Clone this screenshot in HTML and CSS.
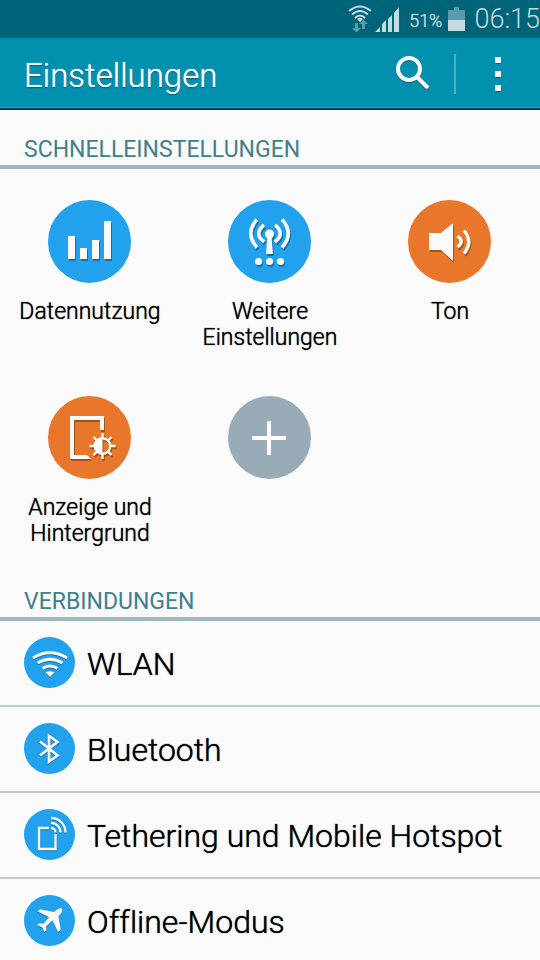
FILE: index.html
```
<!DOCTYPE html>
<html lang="de">
<head>
<meta charset="utf-8">
<meta name="viewport" content="width=device-width, initial-scale=1">
<title>Einstellungen</title>
<link rel="stylesheet" href="styles.css">
</head>
<body>
<div class="status">
  <svg class="status-wifi" width="24" height="28" viewBox="0 0 24 28" aria-hidden="true">
    <g fill="none" stroke="#c3dce2" stroke-width="2">
      <path d="M1 6Q12-3 23 6"/>
      <path d="M4 9.500Q12 2.500 20 9.500"/>
      <path d="M7 13Q12 8 17 13"/>
    </g>
    <path fill="#c3dce2" d="M9 14Q12 11 15 14L12 17Z"/>
    <path fill="#5a9bab" d="M7 18h3v5h3l-4.500 4.500L4 23h3zM14 24v-5h-3l4.500-4.500L20 19h-3v5z"/>
  </svg>
  <svg class="status-signal" width="25" height="25" viewBox="0 0 25 25" aria-hidden="true">
    <path fill="#c3dce2" d="M0 25l5-5v5zM7 25v-8l4-4v12zM13 25V12l4-4v17zM19 25V6l5-6v25z"/>
  </svg>
  <span class="percent">51%</span>
  <svg class="status-battery" width="17" height="24" viewBox="0 0 17 24" aria-hidden="true">
    <path fill="#5a9bab" d="M6 0h5v3h6v10H0V3h6z"/>
    <path fill="#c3dce2" d="M0 13h17v11H0z"/>
  </svg>
  <span class="clock">06:15</span>
</div>
<header class="bar">
  <h1>Einstellungen</h1>
  <button class="bar-button search" type="button" aria-label="Suchen">
    <svg class="engraved" width="36" height="36" viewBox="0 0 36 36" fill="none" stroke="#fafafa" stroke-width="4">
      <circle cx="14" cy="13" r="11"/>
      <path d="M22 21L33 32"/>
    </svg>
  </button>
  <button class="bar-button more" type="button" aria-label="Mehr">
    <svg class="engraved" width="6" height="34" viewBox="0 0 6 34" fill="#fafafa">
      <path d="M0 0h6v6H0zM0 14h6v6H0zM0 28h6v6H0z"/>
    </svg>
  </button>
</header>
<main>
  <section>
    <h2>SCHNELLEINSTELLUNGEN</h2>
    <div class="quick">
      <a class="tile" href="#daten">
        <svg class="disc blue" viewBox="0 0 83 83" fill="#fafafa" aria-hidden="true">
          <path class="glyph" d="M20 36h7v23h-7zM32 48h7v11h-7zM44 40h7v19h-7zM56 21h7v38h-7z"/>
        </svg>
        <span>Datennutzung</span>
      </a>
      <a class="tile" href="#weitere">
        <svg class="disc blue" viewBox="0 0 83 83" fill="#fafafa" aria-hidden="true">
          <g class="glyph">
            <circle cx="41.5" cy="34" r="4.5"/>
            <path d="M39.5 36h4L45 54h-7z"/>
            <g fill="none" stroke="#fafafa" stroke-width="3.6">
              <path d="M36 25Q25.500 33.500 36 42"/>
              <path d="M47 25Q57.500 33.500 47 42"/>
              <path d="M29 19.500Q16.500 33.500 29 47.500"/>
              <path d="M54 19.500Q66.500 33.500 54 47.500"/>
            </g>
            <circle cx="30.500" cy="61.500" r="3.600"/>
            <circle cx="41.500" cy="61.500" r="3.600"/>
            <circle cx="52.500" cy="61.500" r="3.600"/>
          </g>
        </svg>
        <span>Weitere Einstellungen</span>
      </a>
      <a class="tile" href="#ton">
        <svg class="disc orange" viewBox="0 0 83 83" fill="#fafafa" aria-hidden="true">
          <g class="glyph">
            <path d="M21 33h12l12-10v38L33 50H21z"/>
            <g fill="none" stroke="#fafafa" stroke-width="3.400">
              <path d="M49.500 36Q57 41.500 49.500 47"/>
              <path d="M56 30.500Q65.500 42 56 53.500"/>
            </g>
          </g>
        </svg>
        <span>Ton</span>
      </a>
      <a class="tile" href="#anzeige">
        <svg class="disc orange" viewBox="0 0 83 83" fill="#fafafa" aria-hidden="true">
          <g class="glyph">
            <path d="M22 20h34v14h-4V24H26v35h13l4 4H22z"/>
            <path d="M54.500 42.500a7.500 7.500 0 0 0 0 15z"/>
            <g fill="none" stroke="#fafafa" stroke-width="2.400">
              <circle cx="54.500" cy="50" r="7.800"/>
              <path d="M54.500 37v5M54.500 58v5M41.500 50h5M62.500 50h5M45.500 41l3.500 3.500M60 55.500l3.500 3.500M63.500 41L60 44.500M49 55.500L45.500 59"/>
            </g>
          </g>
        </svg>
        <span>Anzeige und Hintergrund</span>
      </a>
      <button class="tile" type="button" aria-label="Hinzufügen">
        <svg class="disc grey" viewBox="0 0 83 83" fill="#fff" aria-hidden="true">
          <path d="M39 25h4v15h15v4H43v15h-4V44H24v-4h15z"/>
        </svg>
      </button>
    </div>
  </section>
  <section>
    <h2>VERBINDUNGEN</h2>
    <ul class="list">
      <li><a href="#wlan">
        <svg class="dot" viewBox="0 0 51 51" fill="#fafafa" aria-hidden="true">
          <g class="glyph">
            <g fill="none" stroke="#fafafa" stroke-width="3">
              <path d="M9 21Q26 10.500 43 21"/>
              <path d="M13.500 26Q26 18.500 38.500 26"/>
              <path d="M18.500 31.500Q26 26.500 33.500 31.500"/>
            </g>
            <path d="M21.500 35.500Q26 33 30.500 35.500L26 40z"/>
          </g>
        </svg>
        <span>WLAN</span>
      </a></li>
      <li><a href="#bluetooth">
        <svg class="dot" viewBox="0 0 51 51" aria-hidden="true">
          <path class="glyph" fill="none" stroke="#fafafa" stroke-width="2.600" d="M16 18.500L33.500 32.500 25 38.500V13L33.500 19 16 32.500"/>
        </svg>
        <span>Bluetooth</span>
      </a></li>
      <li><a href="#tethering">
        <svg class="dot" viewBox="0 0 51 51" fill="none" stroke="#fafafa" stroke-width="2.300" aria-hidden="true">
          <g class="glyph">
            <path d="M25 19H15v21h16.500V25"/>
            <path d="M27 19a4.500 4.500 0 0 1 4.500 4.500M27 14a9.500 9.500 0 0 1 9.500 9.500M27 9a14.500 14.500 0 0 1 14.500 14.500"/>
          </g>
        </svg>
        <span>Tethering und Mobile Hotspot</span>
      </a></li>
      <li><a href="#offline">
        <svg class="dot" viewBox="0 0 51 51" fill="#fafafa" aria-hidden="true">
          <path class="glyph" d="M38 13.500Q35.500 12.500 32.500 15L30 17 16 14.300 13.700 16.500 25 22.300 19.500 28.800 15 28.300 13.500 30.300 18.500 32.500 20.300 37 22.300 35.500 22 31.500 28.500 25.500 34 37 36.700 35 34.500 21.500 37 18.500Q39 16 38 13.500z"/>
        </svg>
        <span>Offline-Modus</span>
      </a></li>
    </ul>
  </section>
</main>
</body>
</html>
```

FILE: styles.css
```
* {
  box-sizing: border-box;
}

body {
  margin: 0;
  background: #fafafa;
  color: #000;
  font-family: Roboto, "Liberation Sans", sans-serif;
  font-weight: 300;
  font-variant-ligatures: none;
}

h1,
h2,
ul {
  margin: 0;
  padding: 0;
}

a {
  color: inherit;
  text-decoration: none;
}

button {
  border: 0;
  padding: 0;
  background: none;
  font: inherit;
}

svg {
  display: block;
  flex: none;
}

.status {
  display: flex;
  align-items: center;
  justify-content: flex-end;
  height: 38px;
  background: #006479;
  color: #c3dce2;
}

.status-wifi {
  margin-right: 3px;
}

.status-signal {
  margin-right: 9px;
}

.percent {
  margin-right: 6px;
  padding-top: 2px;
  font-size: 18px;
  text-shadow: 0 0 1px #c3dce2;
}

.status-battery {
  margin-right: 9px;
}

.clock {
  font-size: 27px;
}

.bar {
  display: flex;
  align-items: center;
  height: 72px;
  padding: 2px 0 0 24px;
  border-bottom: 2px solid #003f58;
  background: #0191af;
  box-shadow: inset 0 -1px #20a4c0;
}

.bar h1 {
  flex: 1;
  padding-top: 4px;
  color: #fafafa;
  font-size: 33px;
  font-weight: 300;
  line-height: 40px;
  text-shadow: 0 0 1px #fafafa, 0 1px 1px #00485c;
}

.bar-button {
  display: flex;
  align-items: center;
  justify-content: center;
  width: 84px;
  height: 40px;
}

.search {
  border-right: 2px solid #4db2c7;
}

.engraved {
  filter: drop-shadow(0 1px 0 #00607a);
}

h2 {
  height: 59px;
  padding: 25px 24px 0;
  border-bottom: 4px solid #9fb8bf;
  color: #3e808e;
  font-size: 23px;
  font-weight: 400;
  line-height: 30px;
}

.quick {
  display: grid;
  grid-template-columns: repeat(3, 1fr);
  grid-template-rows: 196px 166px;
  padding-top: 31px;
}

.tile {
  display: flex;
  flex-direction: column;
  align-items: center;
  gap: 16px;
  padding: 0 18px;
  font-size: 23px;
  line-height: 26px;
  text-align: center;
  text-shadow: 0 0 1px #000;
}

.disc {
  width: 83px;
  height: 83px;
  margin-right: 1px;
  border-radius: 50%;
}

.dot {
  width: 51px;
  height: 51px;
  border-radius: 50%;
  background: #22a1ed;
}

.blue {
  background: #22a1ed;
}

.orange {
  background: #e8762b;
}

.grey {
  background: #99abb7;
}

.glyph {
  filter: drop-shadow(1px 2px 0 rgba(0, 0, 0, 0.3));
}

.dot .glyph {
  filter: drop-shadow(0 1px 0 rgba(0, 0, 0, 0.3));
}

.list {
  list-style: none;
}

.list a {
  display: flex;
  align-items: center;
  gap: 12px;
  height: 86px;
  padding: 0 24px 1px;
  border-bottom: 2px solid #bccad3;
  font-size: 32px;
  text-shadow: 0 0 1px #000;
  white-space: nowrap;
}

.list span {
  padding-top: 2px;
}

.list li:last-child a {
  height: 80px;
  padding-top: 4px;
  border-bottom: 0;
}
```
